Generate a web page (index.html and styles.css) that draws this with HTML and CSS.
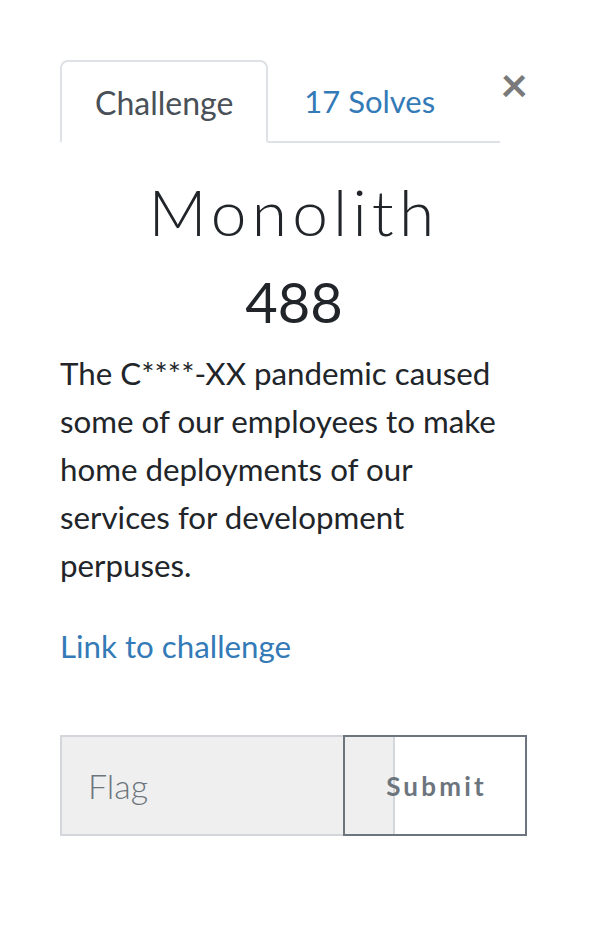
FILE: index.html
```html
<!DOCTYPE html>
<html>
<head>
<meta charset="utf-8">
<link rel="stylesheet" href="styles.css">
</head>
<body>
<div class="modal-body">
  <div class="head">
    <ul class="tabs">
      <li class="tab active">Challenge</li>
      <li class="tab link">17 Solves</li>
    </ul>
    <span class="close">&times;</span>
  </div>
  <h2 class="title">Monolith</h2>
  <h3 class="value">488</h3>
  <p class="desc">The C****-XX pandemic caused some of our employees to make home deployments of our services for development perpuses.</p>
  <p class="chal-link"><a href="#">Link to challenge</a></p>
  <div class="flag-row">
    <div class="flag-input">Flag</div>
    <button class="submit">Submit</button>
  </div>
</div>
</body>
</html>
```
FILE: styles.css
```css
html, body { margin: 0; padding: 0; background: #fff; }
body { font-family: Lato, "Open Sans", sans-serif; color: #212529; }
.modal-body { padding: 60px 62px 0 60px; }
.head { display: flex; align-items: flex-start; }
.tabs { flex: 1; display: flex; list-style: none; margin: 0; padding: 0; border-bottom: 2px solid #dee2e6; height: 81px; }
.tab { font-size: 32px; padding: 0 34px; height: 81px; line-height: 82px; box-sizing: border-box; }
.tab.active { color: #495057; border: 2px solid #dee2e6; border-bottom: 2px solid #fff; border-radius: 8px 8px 0 0; margin-bottom: -2px; height: 83px; padding: 0 33px 0 33px; line-height: 81px; }
.tab.link { color: #337ab7; font-size: 31px; padding-left: 36px; }
.close { width: 28px; text-align: right; font-size: 48px; font-weight: 700; color: #7a7a7a; line-height: 1; margin-top: 0; margin-left: 0; }
.title { margin: 30px 0 0; text-align: center; font-family: Lato, sans-serif; font-weight: 300; font-size: 64px; letter-spacing: 5.2px; line-height: 78px; color: #212529; }
.value { margin: 18px 0 0; text-align: center; font-weight: 400; font-size: 56px; line-height: 66px; color: #212529; }
.desc { margin: 14px 0 0; font-size: 31.3px; line-height: 48px; width: 462px; }
.chal-link { margin: 33px 0 0; font-size: 31.3px; line-height: 48px; }
.chal-link a { color: #337ab7; text-decoration: none; }
.flag-row { position: relative; display: flex; margin-top: 65px; height: 101px; }
.flag-input { width: 335px; box-sizing: border-box; border: 2px solid #d3d6da; background: #efefef; font-size: 34px; font-weight: 300; color: #6c757d; padding-left: 26px; line-height: 97px; }
.submit { position: absolute; left: 283px; top: 0; width: 184px; height: 101px; box-sizing: border-box; border: 2px solid #6c757d; background: transparent; font-family: Lato, sans-serif; font-weight: 700; font-size: 26px; letter-spacing: 3.2px; color: #6c757d; padding: 0 0 0 3px; }
```
